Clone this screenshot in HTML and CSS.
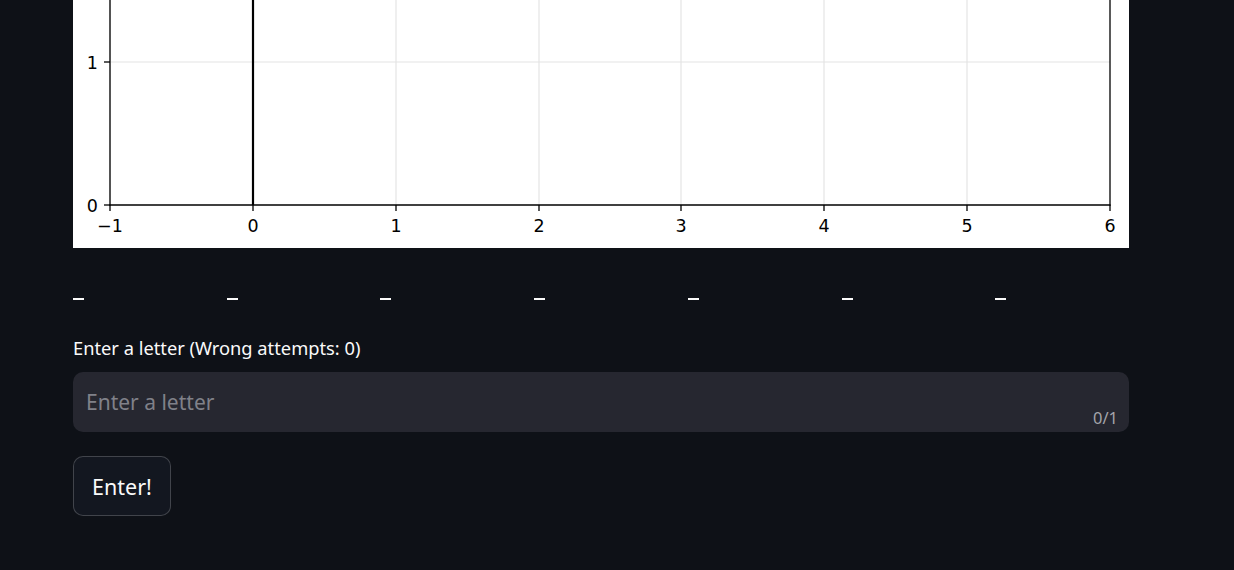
FILE: index.html
```html
<!DOCTYPE html>
<html>
<head>
<meta charset="utf-8">
<link rel="stylesheet" href="styles.css">
</head>
<body>
<main class="main">
  <div class="block">
    <div class="plot">
      <svg width="1056" height="248" viewBox="0 0 1056 248" xmlns="http://www.w3.org/2000/svg">
        <rect x="0" y="0" width="1056" height="248" fill="#ffffff"/>
        <g stroke="#e4e4e4" stroke-width="1.2">
          <line x1="37" y1="0" x2="37" y2="205"/>
          <line x1="180" y1="0" x2="180" y2="205"/>
          <line x1="323" y1="0" x2="323" y2="205"/>
          <line x1="466" y1="0" x2="466" y2="205"/>
          <line x1="608" y1="0" x2="608" y2="205"/>
          <line x1="751" y1="0" x2="751" y2="205"/>
          <line x1="894" y1="0" x2="894" y2="205"/>
          <line x1="37" y1="62" x2="1037" y2="62"/>
        </g>
        <line x1="180" y1="0" x2="180" y2="205" stroke="#000" stroke-width="2.2"/>
        <g stroke="#000" stroke-width="1.3" fill="none">
          <line x1="37" y1="0" x2="37" y2="205.6"/>
          <line x1="1037" y1="0" x2="1037" y2="205.6"/>
          <line x1="36.4" y1="205" x2="1037.6" y2="205"/>
          <line x1="37" y1="205" x2="37" y2="211"/>
          <line x1="180" y1="205" x2="180" y2="211"/>
          <line x1="323" y1="205" x2="323" y2="211"/>
          <line x1="466" y1="205" x2="466" y2="211"/>
          <line x1="608" y1="205" x2="608" y2="211"/>
          <line x1="751" y1="205" x2="751" y2="211"/>
          <line x1="894" y1="205" x2="894" y2="211"/>
          <line x1="1037" y1="205" x2="1037" y2="211"/>
          <line x1="31" y1="205" x2="37" y2="205"/>
          <line x1="31" y1="62" x2="37" y2="62"/>
        </g>
        <g class="ticklbl" text-anchor="middle">
          <text x="37" y="232">−1</text>
          <text x="180" y="232">0</text>
          <text x="323" y="232">1</text>
          <text x="466" y="232">2</text>
          <text x="608" y="232">3</text>
          <text x="751" y="232">4</text>
          <text x="894" y="232">5</text>
          <text x="1037" y="232">6</text>
        </g>
        <g class="ticklbl" text-anchor="end">
          <text x="25" y="212">0</text>
          <text x="25" y="69">1</text>
        </g>
      </svg>
    </div>
    <div class="cols">
      <div class="col"><span class="blank"></span></div>
      <div class="col"><span class="blank"></span></div>
      <div class="col"><span class="blank"></span></div>
      <div class="col"><span class="blank"></span></div>
      <div class="col"><span class="blank"></span></div>
      <div class="col"><span class="blank"></span></div>
      <div class="col"><span class="blank"></span></div>
    </div>
    <div class="field">
      <label class="label">Enter a letter (Wrong attempts: 0)</label>
      <div class="inputbox">
        <input class="input" type="text" maxlength="1" placeholder="Enter a letter">
        <span class="counter">0/1</span>
      </div>
    </div>
    <div>
      <button class="btn">Enter!</button>
    </div>
  </div>
</main>
</body>
</html>
```

FILE: styles.css
```css
html, body {
  margin: 0;
  padding: 0;
  background: #0e1117;
  color: #fafafa;
  font-family: "Noto Sans", "Open Sans", sans-serif;
}
.main {
  padding: 0 105px 0 73px;
}
.block {
  width: 1056px;
  display: flex;
  flex-direction: column;
}
.plot svg {
  display: block;
}
.ticklbl {
  font-family: "DejaVu Sans", sans-serif;
  font-size: 17.5px;
  fill: #000;
}
.cols {
  display: flex;
  gap: 20px;
  margin-top: 40px;
  height: 20px;
}
.col {
  flex: 1;
  height: 20px;
}
.blank {
  display: block;
  width: 11px;
  height: 2px;
  margin-top: 10px;
  background: #fafafa;
}
.field {
  margin-top: 27px;
}
.label {
  display: block;
  font-size: 18.3px;
  line-height: 26px;
  margin-bottom: 11px;
  color: #fafafa;
}
.inputbox {
  position: relative;
  height: 60px;
  background: #262730;
  border-radius: 10px;
  display: flex;
  align-items: center;
}
.input {
  flex: 1;
  background: transparent;
  border: none;
  outline: none;
  color: #fafafa;
  font-family: inherit;
  font-size: 21px;
  padding: 0 13px 1px;
  height: 100%;
}
.input::placeholder {
  color: #808189;
}
.counter {
  position: absolute;
  right: 11px;
  bottom: 3px;
  font-size: 16.5px;
  color: #a3a4aa;
}
.btn {
  margin-top: 24px;
  height: 60px;
  padding: 0 18px;
  background: #131720;
  border: 1px solid rgba(250, 250, 250, 0.2);
  border-radius: 10px;
  color: #fafafa;
  font-family: inherit;
  font-size: 21.5px;
}
```
